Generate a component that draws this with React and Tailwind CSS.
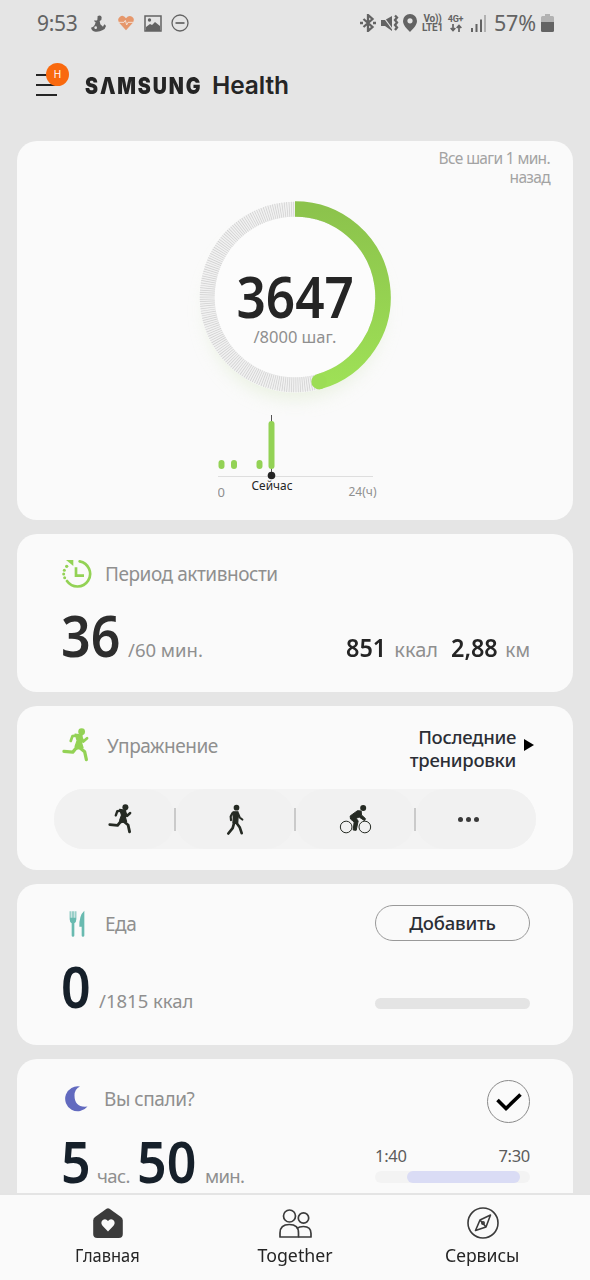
import React from 'react';

const RunnerIcon = ({ className }) => (
  <svg viewBox="64 86 78 100" className={className} fill="none" stroke="currentColor" strokeLinecap="round" strokeLinejoin="round">
    <circle cx="121" cy="97" r="10" fill="currentColor" stroke="none" />
    <path d="M102 104l20 3-1 24 4 13-19 4-4-8 6-17z" fill="currentColor" strokeWidth="4" />
    <path d="M107 108l-13 2-5 14M119 112l7 14 11-10" strokeWidth="8" />
    <path d="M108 141l-13 16-26-2M112 141l18 15 5 23" strokeWidth="9.500" />
  </svg>
);

const WalkerIcon = ({ className }) => (
  <svg viewBox="558 312 54 92" className={className} fill="none" stroke="currentColor" strokeLinecap="round" strokeLinejoin="round">
    <circle cx="589.5" cy="322.5" r="8.500" fill="currentColor" stroke="none" />
    <path d="M579 335l15 0 0 17-1 16-14 0 1-16z" fill="currentColor" strokeWidth="4" />
    <path d="M577 339l-5 10 1 11M594 340l5 12 8 6" strokeWidth="6.500" />
    <path d="M583 366l-5 18-13 16M588 366l11 15 6 18" strokeWidth="8" />
  </svg>
);

const BikeIcon = ({ className }) => (
  <svg viewBox="148 74 98 90" className={className} fill="none" stroke="currentColor">
    <circle cx="169" cy="143" r="17.5" strokeWidth="3" />
    <circle cx="225" cy="143" r="17.5" strokeWidth="3" />
    <circle cx="220" cy="86" r="9" fill="currentColor" stroke="none" />
    <path d="M181 110l22-16 11 1 1 12 12 11-3 6-16-11-9 4 6 8-6 28-9-1 3-24-11-9z" fill="currentColor" strokeWidth="3" strokeLinejoin="round" />
  </svg>
);

const ActiveTimeIcon = () => (
  <svg viewBox="0 0 90 90" className="h-[30px] w-[30px]" fill="none" stroke="#93d255">
    <path d="M53 7A38 38 0 1 1 15 66" strokeWidth="8" strokeLinecap="round" />
    <path d="M42 25v25h24" strokeWidth="8" />
    <path d="M12 3h22v18z" fill="#93d255" stroke="none" />
    <g fill="#93d255" stroke="none">
      <circle cx="14" cy="22" r="5" />
      <circle cx="7" cy="34" r="4.500" />
      <circle cx="5" cy="45" r="4.500" />
      <circle cx="8" cy="56" r="4.500" />
    </g>
  </svg>
);

const FoodIcon = () => (
  <svg viewBox="0 0 48 80" className="h-[27px] w-4" fill="#69bab0">
    <path d="M2 3h3v20h3V3h3v20h2V3h3v20h3V3h3v24q0 9-6 12v37q0 4-4 4t-4-4V39q-6-3-6-12z" />
    <path d="M46 2v74q0 4-4 4t-4-4V50h-7q-1-34 15-48z" />
  </svg>
);

const StatusBar = () => (
  <div className="flex h-[46px] shrink-0 items-center pl-[37px] pr-[36px] text-[#636363]">
    <span className="w-[54px] text-[21px] leading-none tracking-[-0.3px]">9:53</span>
    <svg viewBox="0 0 45 51" className="h-[17px] w-[15px]" fill="currentColor">
      <path d="M20 3q10-5 12 4l-1 8-5 3 2 10 8 7q2-4 5-7l4 5q-2 10-11 13-8 5-21 4Q2 48 0 38q8-1 11-8l3-8q-5-2-4-6 6 2 9-1z" />
      <circle cx="14" cy="38" r="4" fill="#e5e5e5" />
    </svg>
    <svg viewBox="0 0 24 22" className="ml-[12px] h-[16px] w-[16px]">
      <path d="M12 22L2 11Q-2 5 3 1.500T12 4q4-5 9-2.500T22 11z" fill="#e6976b" />
      <path d="M1 10h8l2-3 2 7 2-4h8" fill="none" stroke="#f3dfd2" strokeWidth="1.500" />
    </svg>
    <svg viewBox="0 0 18 17" className="ml-[10px] h-[17px] w-[18px]">
      <path d="M1 1h16v15H1z" fill="none" stroke="currentColor" strokeWidth="1.500" />
      <path d="M2 12l4-3 2 1 3-3 5 4v5H2z" fill="currentColor" />
      <circle cx="5.500" cy="5" r="1.700" fill="currentColor" />
    </svg>
    <svg viewBox="0 0 18 18" className="ml-[9px] h-[18px] w-[18px]" fill="none" stroke="currentColor" strokeWidth="1.300">
      <circle cx="9" cy="9" r="8" />
      <path d="M4.500 9h9" strokeWidth="1.700" />
    </svg>

    <div className="ml-auto flex items-center">
      <svg viewBox="0 0 16 18" className="h-[18px] w-4" fill="none" stroke="currentColor" strokeWidth="2.300">
        <path d="M3.500 5l9 8-4.500 4V1l4.500 4-9 8" />
        <path d="M0 9h3M13 9h3" />
      </svg>
      <svg viewBox="0 0 18 18" className="ml-[5px] h-[18px] w-[18px]" fill="currentColor">
        <path d="M0 6h4l7-4v15l-7-5H0z" />
        <path d="M1 1l11 15" stroke="#e5e5e5" strokeWidth="1.200" />
        <path d="M14 1.500l2 2-2 2.500 2 2.500-2 2.500 2 2.500-2 2.500" fill="none" stroke="currentColor" strokeWidth="2.300" />
      </svg>
      <svg viewBox="0 0 14 18" className="ml-[4px] h-[18px] w-[14px]" fill="currentColor">
        <path fillRule="evenodd" d="M7 0a7 7 0 0 1 7 7c0 4-4 8-7 11C4 15 0 11 0 7a7 7 0 0 1 7-7zm0 4.200a2.600 2.600 0 1 0 0 5.200 2.600 2.600 0 0 0 0-5.200z" />
      </svg>
      <div className="ml-[4px] flex w-[23px] flex-col items-center font-['Roboto'] text-[10px] font-bold leading-[9px] tracking-[-0.2px]">
        <span>Vo))</span>
        <span>LTE1</span>
      </div>
      <div className="ml-[3px] flex w-[17px] flex-col items-center">
        <span className="font-['Roboto'] text-[9px] font-bold leading-[9px] tracking-[-0.2px]">4G+</span>
        <svg viewBox="0 0 12 8" className="h-2 w-3" fill="none" stroke="currentColor" strokeWidth="1.700">
          <path d="M3 0v6M.7 4L3 6.500 5.300 4M9 8V2M6.700 4L9 1.500 11.300 4" />
        </svg>
      </div>
      <svg viewBox="0 0 15 17" className="ml-[7px] h-[17px] w-[15px]" fill="currentColor">
        <path d="M0 13h2v4H0zM4.500 9h2v8h-2zM9 4.500h2V17H9z" />
        <path d="M13 0h2v17h-2z" fill="#b2b2b2" />
      </svg>
      <span className="ml-[8px] w-[47px] text-[21.5px] leading-none tracking-[-0.2px]">57%</span>
      <svg viewBox="0 0 13 18" className="h-[18px] w-[13px]">
        <path d="M4 0h5v2h2.500Q13 2 13 3.500V8H0V3.500Q0 2 1.500 2H4z" fill="#b2b2b2" />
        <path d="M0 8h13v8.500q0 1.500-1.500 1.500h-10Q0 18 0 16.500z" fill="currentColor" />
      </svg>
    </div>
  </div>
);

const Header = () => (
  <header className="flex h-[95px] shrink-0 pl-9 text-[#252525]">
    <div className="relative mt-[28px] flex h-[26px] w-[49px] flex-col gap-[8px]">
      <span className="h-[2px] w-[21px] bg-[#252525]" />
      <span className="h-[2px] w-[21px] bg-[#252525]" />
      <span className="h-[2px] w-[21px] bg-[#252525]" />
      <span className="absolute left-[10px] top-[-11px] flex h-[23px] w-[23px] items-center justify-center rounded-full bg-[#f9690e] font-['Inter'] text-[10px] text-white">
        H
      </span>
    </div>
    <h1 className="mt-[25px] flex h-7 items-baseline font-['Inter'] leading-7" aria-label="SAMSUNG Health">
      <span className="w-[127px]">
        <span className="inline-block origin-left scale-x-[0.85] text-[23px] font-black tracking-[2.2px]">SΛMSUNG</span>
      </span>
      <span className="text-[24.5px] font-semibold tracking-[-0.1px]">Health</span>
    </h1>
  </header>
);

const Card = ({ className, children }) => (
  <section className={`w-[556px] shrink-0 rounded-[20px] bg-[#fafafa] pl-[45px] pr-[43px] ${className}`}>{children}</section>
);

const Title = ({ children }) => (
  <h2 className="whitespace-nowrap text-[19px] leading-9 tracking-[-0.45px] text-[#8f8f8f]">{children}</h2>
);

const Big = ({ className, children }) => (
  <span className={`-ml-px mr-px text-[57px] font-semibold leading-[60px] ${className}`}>
    <span className="inline-block origin-left scale-x-[0.91]">{children}</span>
  </span>
);

const Unit = ({ className, children }) => (
  <span className={`whitespace-nowrap text-[#8f8f8f] ${className}`}>{children}</span>
);

const StepsRing = ({ steps, goal }) => {
  const angle = (steps / goal) * 2 * Math.PI;
  const endX = 120 + 88 * Math.sin(angle);
  const endY = 120 - 88 * Math.cos(angle);
  return (
    <svg viewBox="0 0 240 240" className="h-[240px] w-[240px]">
      <defs>
        <linearGradient id="ring" x1="0" y1="0" x2="0" y2="1">
          <stop offset="0" stopColor="#8cc34c" />
          <stop offset="1" stopColor="#9ee056" />
        </linearGradient>
        <filter id="glow" x="-30%" y="-30%" width="160%" height="160%">
          <feGaussianBlur stdDeviation="9" />
        </filter>
      </defs>
      <circle cx="120" cy="134" r="88" fill="#dfebd0" opacity="0.6" filter="url(#glow)" />
      <circle cx="120" cy="120" r="95.500" fill="#fcfcfc" />
      <circle cx="120" cy="120" r="87.800" fill="none" stroke="#f1f1f1" strokeWidth="15" />
      <circle cx="120" cy="120" r="87.800" fill="none" stroke="#cfcfcf" strokeWidth="15" strokeDasharray="0.7 1.5" />
      <path d={`M120 32A88 88 0 0 1 ${endX} ${endY}`} fill="none" stroke="url(#ring)" strokeWidth="15.500" />
      <circle cx={endX} cy={endY} r="7.750" fill="#9cdd55" />
    </svg>
  );
};

const hours = [3.5, 16, 41.5];

const DayChart = () => (
  <svg viewBox="0 0 170 90" className="h-[90px] w-[170px]">
    <path d="M0 63.500h155" stroke="#dedede" />
    <path d="M53.500 2v60" stroke="#555" />
    {hours.map((x) => (
      <rect key={x} x={x - 3} y="47" width="6" height="9" rx="3" fill="#93d255" />
    ))}
    <rect x="50.500" y="8" width="6" height="48" rx="3" fill="#93d255" />
    <circle cx="53.500" cy="62.500" r="3.800" fill="#252525" />
    <text x="-0.5" y="84" fontSize="13" fill="#8f8f8f">0</text>
    <text x="33.500" y="77" fontSize="13" fill="#252525" textLength="41" lengthAdjust="spacingAndGlyphs">Сейчас</text>
    <text x="130.500" y="83" fontSize="13" fill="#8f8f8f" textLength="28" lengthAdjust="spacingAndGlyphs">24(ч)</text>
  </svg>
);

const StepsCard = () => (
  <section className="flex h-[379px] w-[556px] shrink-0 flex-col rounded-[20px] bg-[#fafafa]">
    <p className="ml-auto mr-[23px] mt-2 w-[120px] whitespace-nowrap text-right text-[15.500px] leading-[19px] tracking-[-0.65px] text-[#a3a3a3]">
      Все шаги 1 мин.
      <br />
      назад
    </p>
    <div className="relative ml-[158px] mt-[-10px] h-[240px] w-[240px]">
      <StepsRing steps={3647} goal={8000} />
      <div className="absolute inset-0 flex flex-col items-center pt-[97px]">
        <span className="scale-x-[0.9] text-[57px] font-semibold leading-[44px] text-[#252525]">3647</span>
        <span className="mt-[9px] whitespace-nowrap text-[16.500px] leading-5 text-[#8f8f8f]">/8000 шаг.</span>
      </div>
    </div>
    <div className="ml-[201px] mt-[-4px]">
      <DayChart />
    </div>
  </section>
);

const ActiveTimeCard = () => (
  <Card className="h-[158px] pt-[21px]">
    <div className="flex h-[38px] items-center gap-[13px]">
      <ActiveTimeIcon />
      <Title>Период активности</Title>
    </div>
    <div className="mt-[12px] flex items-baseline">
      <Big className="w-[66px] text-[#2d2d2d]">36</Big>
      <Unit className="text-[18.500px]">/60 мин.</Unit>
      <div className="ml-auto flex items-baseline text-[26px] font-semibold leading-none text-[#252525]">
        <span className="w-[48px]">
          <span className="inline-block origin-left scale-x-[0.9]">851</span>
        </span>
        <Unit className="w-[57px] text-[20px] font-normal">ккал</Unit>
        <span className="w-[54px]">
          <span className="inline-block origin-left scale-x-[0.9]">2,88</span>
        </span>
        <Unit className="text-[19px] font-normal">км</Unit>
      </div>
    </div>
  </Card>
);

const Divider = () => <span className="relative -mx-px h-[23px] w-[2px] bg-[#cacaca]" />;

const Segment = ({ className, children }) => (
  <div className={`flex h-full items-center justify-center rounded-full bg-[#f1f1f1] ${className}`}>{children}</div>
);

const ExerciseCard = () => (
  <Card className="h-[164px] pt-5">
    <div className="flex h-[63px] items-start">
      <RunnerIcon className="mt-[2px] h-[34px] w-[27px] text-[#93d255]" />
      <div className="ml-[18px] mt-[2px]">
        <Title>Упражнение</Title>
      </div>
      <div className="ml-auto flex items-start">
        <p className="text-right text-[18.500px] font-medium leading-[22.500px] tracking-[-0.3px] text-[#2b2e35]">
          Последние
          <br />
          тренировки
        </p>
        <svg viewBox="0 0 10 12" className="ml-2 mr-[-4px] mt-[13px] h-3 w-[10px]">
          <path d="M0 0l10 6-10 6z" fill="#000" />
        </svg>
      </div>
    </div>
    <div className="-ml-2 flex h-[60px] w-[482px] items-center rounded-full bg-[#f3f3f3] text-[#252a23]">
      <Segment className="w-[121px] pl-[10px]">
        <RunnerIcon className="h-[30px] w-[24px]" />
      </Segment>
      <Divider />
      <Segment className="w-[120px]">
        <WalkerIcon className="h-[31px] w-[18px]" />
      </Segment>
      <Divider />
      <Segment className="w-[120px]">
        <BikeIcon className="h-[30px] w-[33px]" />
      </Segment>
      <Divider />
      <Segment className="flex-1 gap-[3px] pr-[14px]">
        <span className="h-[5px] w-[5px] rounded-full bg-[#3a3a3a]" />
        <span className="h-[5px] w-[5px] rounded-full bg-[#3a3a3a]" />
        <span className="h-[5px] w-[5px] rounded-full bg-[#3a3a3a]" />
      </Segment>
    </div>
  </Card>
);

const FoodCard = () => (
  <Card className="h-[161px] pt-[21px]">
    <div className="flex h-9 items-center">
      <div className="w-[43px] pl-[7px]">
        <FoodIcon />
      </div>
      <div className="mt-[2px]">
        <Title>Еда</Title>
      </div>
      <button className="ml-auto h-9 w-[155px] rounded-full border border-[#999] text-[18.500px] font-medium leading-none tracking-[-0.2px] text-[#2b2e35]">
        Добавить
      </button>
    </div>
    <div className="mt-[15px] flex items-baseline">
      <Big className="w-[37px] text-[#16202a]">0</Big>
      <Unit className="text-[18.500px]">/1815 ккал</Unit>
      <span className="mb-[7px] ml-auto h-[11px] w-[155px] self-end rounded-full bg-[#e4e4e4]" />
    </div>
  </Card>
);

const SleepCard = () => (
  <Card className="h-[180px] pt-[21px]">
    <div className="flex h-[43px] items-start">
      <svg viewBox="0 0 22 26" className="ml-[3px] mt-[6px] h-[26px] w-[23px]">
        <path d="M14.500 0.500A12.500 12.500 0 1 0 22 20.500Q9 22 9 9.500 9 3 14.500 0.500z" fill="#626abf" />
      </svg>
      <div className="ml-[16px] mt-px">
        <Title>Вы спали?</Title>
      </div>
      <div className="ml-auto flex h-[43px] w-[43px] items-center justify-center rounded-full border border-[#8a8a8a]">
        <svg viewBox="0 0 26 20" className="h-5 w-[26px]" fill="none" stroke="#000" strokeWidth="3.600">
          <path d="M1.500 8l8.500 8.500L24.500 2.500" />
        </svg>
      </div>
    </div>
    <div className="mt-[8px] flex items-baseline">
      <Big className="w-[35px] text-[#16202a]">5</Big>
      <Unit className="w-[41px] text-[18.500px] tracking-[-0.6px]">час.</Unit>
      <Big className="w-[67px] text-[#16202a]">50</Big>
      <Unit className="text-[18.500px] tracking-[-0.7px]">мин.</Unit>
      <div className="ml-auto w-[155px] self-end pb-[8px]">
        <div className="flex justify-between text-[16.500px] leading-5 tracking-[-0.3px] text-[#5c5c5c]">
          <span>1:40</span>
          <span>7:30</span>
        </div>
        <div className="mt-[5px] h-3 rounded-full bg-[#f3f3f3] pl-8">
          <div className="h-3 w-[113px] rounded-full bg-[#dadcf5]" />
        </div>
      </div>
    </div>
  </Card>
);

const NavItem = ({ label, labelClassName, children }) => (
  <div className="flex w-[187.500px] flex-col items-center">
    <div className="flex h-8 items-center">{children}</div>
    <span className={`mt-[4px] text-[18.500px] leading-6 text-[#252525] ${labelClassName}`}>{label}</span>
  </div>
);

const BottomNav = () => (
  <nav className="flex h-[87px] shrink-0 justify-center border-t-2 border-[#e4e4e4] bg-[#fafafa] pt-[12px]">
    <NavItem label="Главная" labelClassName="scale-x-[0.89]">
      <svg viewBox="0 0 30 30" className="h-[30px] w-[30px]">
        <path d="M13.500.8q1.500-1 3 0L28 9q1.800 1.300 1.800 3.500V26q0 4-4 4H4.200q-4 0-4-4V12.500Q.2 10.300 2 9z" fill="#3b3b3b" />
        <path d="M15 23.500l-5.500-5.700q-2.300-3 0-5.500 3-2.300 5.500.7 2.500-3 5.500-.7 2.300 2.500 0 5.500z" fill="#fafafa" />
      </svg>
    </NavItem>
    <NavItem label="Together" labelClassName="scale-x-[0.96]">
      <svg viewBox="0 0 33 29" className="h-[29px] w-[33px]" fill="none" stroke="#3b3b3b" strokeWidth="1.700" strokeLinejoin="round">
        <circle cx="10.500" cy="7" r="6" />
        <circle cx="24.500" cy="9" r="5.200" />
        <path d="M1 28v-4q0-8.500 9.300-8.500T19.500 24v4z" />
        <path d="M18 19.500q2-2 6.500-2 7.500 0 7.500 7V28H19.500" />
      </svg>
    </NavItem>
    <NavItem label="Сервисы" labelClassName="scale-x-[0.95]">
      <svg viewBox="0 0 32 32" className="h-8 w-8" fill="none" stroke="#3b3b3b" strokeWidth="1.600" strokeLinejoin="round">
        <circle cx="16" cy="16" r="15" />
        <path d="M23.500 8L19 20 8.500 23.500 13 13zM13 13l6 7" />
        <circle cx="16" cy="16" r="1.200" />
      </svg>
    </NavItem>
  </nav>
);

const App = () => (
  <div className="flex h-[1280px] w-[590px] flex-col overflow-hidden bg-[#e5e5e5] font-['Noto_Sans',sans-serif]">
    <StatusBar />
    <Header />
    <main className="flex min-h-0 flex-1 flex-col items-center gap-[14px] overflow-hidden">
      <StepsCard />
      <ActiveTimeCard />
      <ExerciseCard />
      <FoodCard />
      <SleepCard />
    </main>
    <BottomNav />
  </div>
);

export default App;
